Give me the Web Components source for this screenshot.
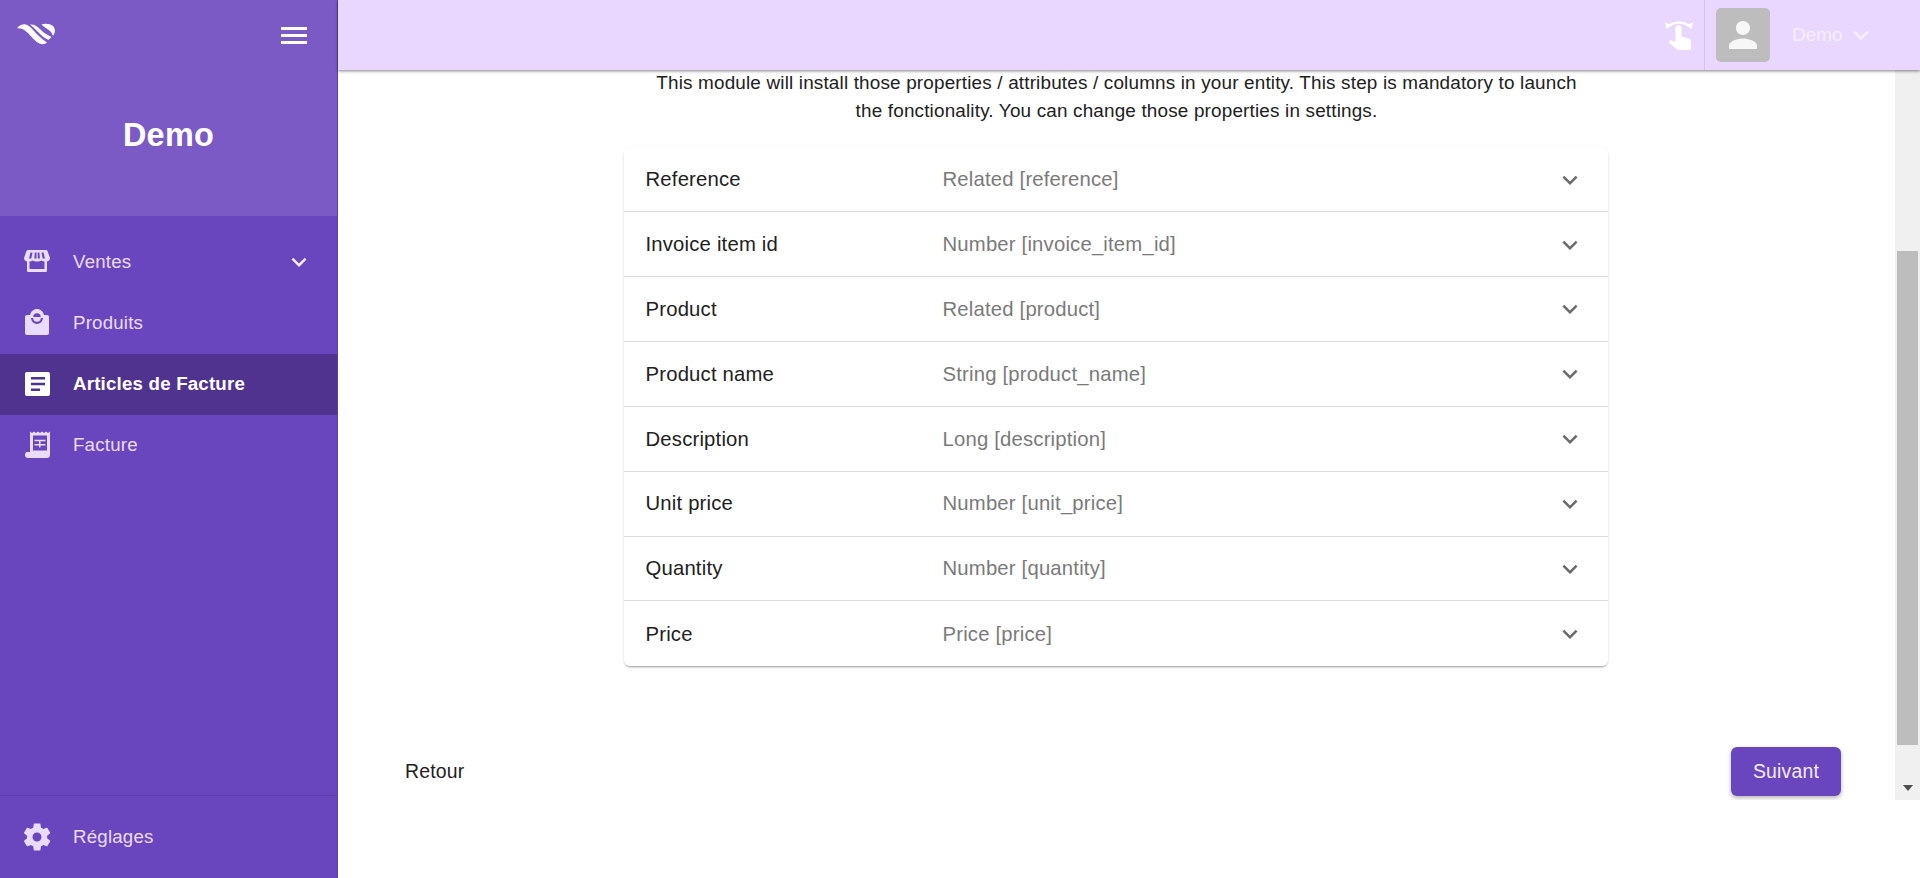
<!DOCTYPE html>
<html>
<head>
<meta charset="utf-8">
<title>Demo</title>
<style>
html, body { margin: 0; height: 100%; overflow: hidden; }
body { font-family: "Liberation Sans", Arial, sans-serif; background: #fff; }
</style>
</head>
<body>
<app-shell>
  <side-nav slot="nav"></side-nav>
  <top-bar slot="top"></top-bar>
  <scroll-pane slot="content">
    <mapping-step></mapping-step>
  </scroll-pane>
</app-shell>

<script>
const ICONS = {
  store: '<path fill-rule="evenodd" d="M5 2h18c.7 0 1.200.4 1.500 1l2.500 7c0 2-1.300 3.200-3 3.500V22.500c0 1-.8 1.500-1.500 1.500h-17C4.800 24 4 23.500 4 22.500V13.500C2.300 13.200 1 12 1 10l2.500-7C3.800 2.400 4.300 2 5 2zM7.500 4.500 6 10.500h2.300l1.200-6zm4.300 0-.5 6h2.200v-6zm2.900 0v6h2.200l-.5-6zm3.800 0 1.200 6H22l-1.500-6zM6.500 13.500V21h15v-7.500c-1.100 0-2.300-.3-3.200-1-1.100.7-2.600 1-4.300 1s-3.200-.3-4.300-1c-.9.700-2.100 1-3.200 1z"/>',
  bag: '<path fill-rule="evenodd" d="M14 0c-3.400 0-6.300 2.500-6.900 6H4C2.900 6 2 6.900 2 8v16c0 1.100.9 2 2 2h20c1.100 0 2-.9 2-2V8c0-1.100-.9-2-2-2h-3.100C20.300 2.500 17.400 0 14 0zM10.300 8a3.700 3.700 0 0 1 7.400 0zM8 9h2.200a3.800 3.800 0 0 0 7.600 0H20a6 6 0 0 1-12 0z"/>',
  article: '<path fill-rule="evenodd" d="M4 2h21c1.200 0 2 .8 2 2v20c0 1.200-.8 2-2 2H4c-1.200 0-2-.8-2-2V4c0-1.200.8-2 2-2zM8 7v2.600h14V7zm0 5.700v2.600h14v-2.600zm0 5.700V21h9v-2.600z"/>',
  receipt: '<path fill-rule="evenodd" d="M7 .5l2 1.500 2-1.500 2 1.500 2-1.500 2 1.500 2-1.500 2 1.500 2-1.500 2 1.500 2-1.500V24c0 1.700-1.300 3-3 3H5c-1.700 0-3-1.300-3-3 0-1.500.6-3 2-3h3zM10 4.500V19.500H24V4.500zM11.500 8.800h11v1.500h-5V13h5v1.500h-5v2h-1.500v-2h-4.500V13h4.500v-2.700h-4.500z"/>',
  gear: '<path d="M24.100 15.300c.1-.4.100-.9.100-1.300s0-.9-.1-1.300l2.800-2.200c.3-.2.300-.6.200-.9l-2.700-4.600c-.2-.3-.5-.4-.8-.3l-3.300 1.300c-.7-.5-1.400-1-2.300-1.300l-.5-3.500c0-.3-.3-.6-.7-.6h-5.400c-.3 0-.6.300-.7.600l-.5 3.500c-.8.300-1.600.8-2.300 1.300L4.600 4.700c-.3-.1-.6 0-.8.300L1.100 9.600c-.2.300-.1.700.2.900l2.800 2.200c-.1.400-.1.900-.1 1.300s0 .9.100 1.300l-2.800 2.200c-.3.200-.3.600-.2.900l2.700 4.600c.2.300.5.400.8.300l3.300-1.300c.7.500 1.400 1 2.300 1.300l.5 3.500c0 .3.300.6.700.6h5.400c.3 0 .6-.3.700-.6l.5-3.500c.8-.3 1.600-.8 2.300-1.300l3.300 1.300c.3.100.6 0 .8-.3l2.700-4.600c.2-.3.100-.7-.2-.9zM14 18.500c-2.500 0-4.500-2-4.500-4.500s2-4.500 4.500-4.500 4.500 2 4.500 4.500-2 4.500-4.500 4.500z"/>'
};

// rows of the mapping card
const FIELDS = [
  ['Reference', 'Related [reference]'],
  ['Invoice item id', 'Number [invoice_item_id]'],
  ['Product', 'Related [product]'],
  ['Product name', 'String [product_name]'],
  ['Description', 'Long [description]'],
  ['Unit price', 'Number [unit_price]'],
  ['Quantity', 'Number [quantity]'],
  ['Price', 'Price [price]']
];

customElements.define('app-shell', class extends HTMLElement {
  constructor() {
    super();
    this.attachShadow({ mode: 'open' });
    this.shadowRoot.innerHTML = `
<style>
:host { display: flex; height: 878px; width: 1920px; }
.nav { flex: 0 0 338px; display: flex; }
.main { flex: 1; min-width: 0; display: flex; flex-direction: column; position: relative; }
.content { height: 730px; display: flex; }
::slotted(side-nav) { flex: 1; }
::slotted(scroll-pane) { flex: 1; }
</style>
<div class="nav"><slot name="nav"></slot></div>
<div class="main">
  <slot name="top"></slot>
  <div class="content"><slot name="content"></slot></div>
</div>`;
  }
});

customElements.define('nav-item', class extends HTMLElement {
  constructor() {
    super();
    this.attachShadow({ mode: 'open' });
  }
  connectedCallback() {
    const icon = ICONS[this.getAttribute('icon')];
    const arrow = this.hasAttribute('expand')
      ? '<svg class="arrow" width="30" height="30" viewBox="0 0 24 24"><path d="M7.410 8.590 12 13.170l4.590-4.580L18 10l-6 6-6-6z"/></svg>'
      : '';
    this.shadowRoot.innerHTML = `
<style>
:host { display: flex; align-items: center; height: 61px; padding-left: 23px; color: #e9dcff; font-size: 18.7px; letter-spacing: .2px; }
:host([active]) { background: #50338f; color: #fff; font-weight: 700; }
svg { fill: currentColor; flex: none; }
.label { margin-left: 22px; flex: 1; }
.arrow { margin-right: 23px; fill: #f3ebff; }
</style>
<svg width="28" height="28" viewBox="0 0 28 28">${icon}</svg>
<span class="label"><slot></slot></span>${arrow}`;
  }
});

customElements.define('side-nav', class extends HTMLElement {
  constructor() {
    super();
    this.attachShadow({ mode: 'open' });
    this.shadowRoot.innerHTML = `
<style>
:host { display: flex; flex-direction: column; background: #6a46be; border-right: 1px solid #5f3db0; box-sizing: border-box; height: 878px; }
.head { height: 216px; background: #7b5ac6; display: flex; flex-direction: column; flex: none; }
.brand { display: flex; align-items: center; justify-content: space-between; height: 70px; padding: 0 30px 0 16px; }
.title { margin-top: 44.5px; text-align: center; color: #fff; font-size: 32.4px; font-weight: 700; line-height: 40px; letter-spacing: .3px; }
.menu { flex: 1; padding-top: 15.5px; }
.foot { flex: none; height: 82px; border-top: 1px solid #5d3cad; display: flex; flex-direction: column; justify-content: center; }
.burger { width: 26px; height: 17px; display: flex; flex-direction: column; justify-content: space-between; }
.burger i { height: 3px; background: #fff; }
.logo { margin-top: -2px; fill: #fff; }
</style>
<div class="head">
  <div class="brand">
    <svg class="logo" width="40" height="22" viewBox="0 0 40 22">
      <path d="M1 5.300C3 2.500 6 1 9 1.200 12 1.500 15 4.500 18 8c3 3.500 7 7.500 13 11.500-2 2-5 2-7.500 1C19 18.500 15 13 12 10 9 7 5 4.800 1 5.300z"/>
      <path d="M14 1.600C17 .8 21 3 24 6c3 3 6 5.500 11.500 8-1.500 1.500-2 2-3 3-4.500-2-8-5.500-11-8.500C19 6 16.500 3.500 14 1.600z"/>
      <path d="M25.500 1.500C29 0 34 .5 37 3c2.500 2.500 2.500 6.500 0 10-1-4-4-6-6.500-7.500-2-1.500-3.500-2.700-5-4z"/>
    </svg>
    <div class="burger"><i></i><i></i><i></i></div>
  </div>
  <div class="title">Demo</div>
</div>
<div class="menu">
  <nav-item icon="store" expand>Ventes</nav-item>
  <nav-item icon="bag">Produits</nav-item>
  <nav-item icon="article" active>Articles de Facture</nav-item>
  <nav-item icon="receipt">Facture</nav-item>
</div>
<div class="foot"><nav-item icon="gear">Réglages</nav-item></div>`;
  }
});

customElements.define('top-bar', class extends HTMLElement {
  constructor() {
    super();
    this.attachShadow({ mode: 'open' });
    this.shadowRoot.innerHTML = `
<style>
:host { display: flex; align-items: stretch; justify-content: flex-end; height: 70px; background: #e9d7ff; box-shadow: 0 1px 3px rgba(0,0,0,.5); position: relative; z-index: 2; flex: none; color: #f5eeff; font-size: 19px; }
.touch { display: flex; align-items: center; padding-right: 11px; border-right: 1px solid #d6c1ef; }
.user { display: flex; align-items: center; padding-left: 11px; width: 215px; box-sizing: border-box; }
.avatar { width: 54px; height: 54px; border-radius: 5px; background: #bdbdbd; display: flex; align-items: center; justify-content: center; }
.name { margin-left: 22px; }
.chev { margin-left: 2px; }
</style>
<div class="touch">
  <svg width="28" height="32" viewBox="0 0 28 32" fill="#fff">
    <path d="M3 7Q14 0 25 7" fill="none" stroke="#fff" stroke-width="2.500"/>
    <path d="M0 3.500 1.500 10 7 6zM28 3.500 26.500 10 21 6z"/>
    <path d="M10.500 9c0-1.600 1.300-3 3-3s3 1.400 3 3v8.500l6.500 1.700c1.700.5 2.800 1.800 2.800 3.500V31H12.500L4.500 24c-1-1 .3-3.300 2-2.500l4 1.500z"/>
  </svg>
</div>
<div class="user">
  <div class="avatar"><svg width="42" height="42" viewBox="0 0 24 24" fill="#f7f7f7"><path d="M12 12c2.210 0 4-1.790 4-4s-1.790-4-4-4-4 1.790-4 4 1.790 4 4 4zm0 2c-2.670 0-8 1.340-8 4v2h16v-2c0-2.660-5.330-4-8-4z"/></svg></div>
  <span class="name">Demo</span>
  <svg class="chev" width="32" height="32" viewBox="0 0 24 24" fill="#f5eeff"><path d="M7.410 8.590 12 13.170l4.590-4.580L18 10l-6 6-6-6z"/></svg>
</div>`;
  }
});

customElements.define('scroll-pane', class extends HTMLElement {
  constructor() {
    super();
    this.attachShadow({ mode: 'open' });
    this.shadowRoot.innerHTML = `
<style>
:host { display: flex; min-width: 0; }
.body { flex: 1; min-width: 0; overflow: hidden; }
.bar { flex: 0 0 25px; background: #f0f0f0; display: flex; flex-direction: column; align-items: center; padding: 181px 0 0; box-sizing: border-box; }
.thumb { width: 21px; height: 494px; background: #bdbdbd; }
.down { margin-top: 40px; width: 0; height: 0; border: 5.5px solid transparent; border-top: 6px solid #505050; border-bottom: 0; }
</style>
<div class="body"><slot></slot></div>
<div class="bar"><div class="thumb"></div><div class="down"></div></div>`;
  }
});

customElements.define('field-row', class extends HTMLElement {
  constructor() {
    super();
    this.attachShadow({ mode: 'open' });
  }
  connectedCallback() {
    this.shadowRoot.innerHTML = `
<style>
:host { display: flex; align-items: center; height: 64.85px; box-sizing: border-box; padding: .6px 23px 0 22px; font-size: 20.3px; letter-spacing: .19px; color: #212121; }
:host(:not(:last-child)) { border-bottom: 1px solid #dcdcdc; }
.label { flex: 0 0 297px; }
.type { flex: 1; color: #7a7a7a; }
svg { fill: #6a6a6a; flex: none; }
</style>
<span class="label">${this.getAttribute('label')}</span>
<span class="type">${this.getAttribute('type')}</span>
<svg width="30" height="30" viewBox="0 0 24 24"><path d="M7.410 8.590 12 13.170l4.590-4.580L18 10l-6 6-6-6z"/></svg>`;
  }
});

customElements.define('mapping-step', class extends HTMLElement {
  constructor() {
    super();
    this.attachShadow({ mode: 'open' });
    const rows = FIELDS.map(f => `<field-row label="${f[0]}" type="${f[1]}"></field-row>`).join('');
    this.shadowRoot.innerHTML = `
<style>
:host { display: flex; flex-direction: column; height: 730px; }
.intro { margin: -1px auto 0; width: 940px; height: 78.5px; text-align: center; font-size: 18.9px; line-height: 28px; color: #212121; letter-spacing: .17px; }
.card { align-self: center; margin-left: -2px; width: 984px; background: #fff; border-radius: 6px; box-shadow: 0 2px 2px -1px rgba(0,0,0,.3), 0 1px 3px rgba(0,0,0,.12); }
.actions { margin-top: auto; display: flex; align-items: center; justify-content: space-between; padding: 0 54px 4px 67px; font-size: 19.4px; letter-spacing: .2px; color: #212121; }
.next { width: 110px; height: 49px; border-radius: 6px; background: #6a46be; color: #f3ebff; display: flex; align-items: center; justify-content: center; box-shadow: 0 2px 4px rgba(0,0,0,.3); }
</style>
<div class="intro">This module will install those properties / attributes / columns in your entity. This step is mandatory to launch the fonctionality. You can change those properties in settings.</div>
<div class="card">${rows}</div>
<div class="actions"><span>Retour</span><span class="next">Suivant</span></div>`;
  }
});
</script>
</body>
</html>
